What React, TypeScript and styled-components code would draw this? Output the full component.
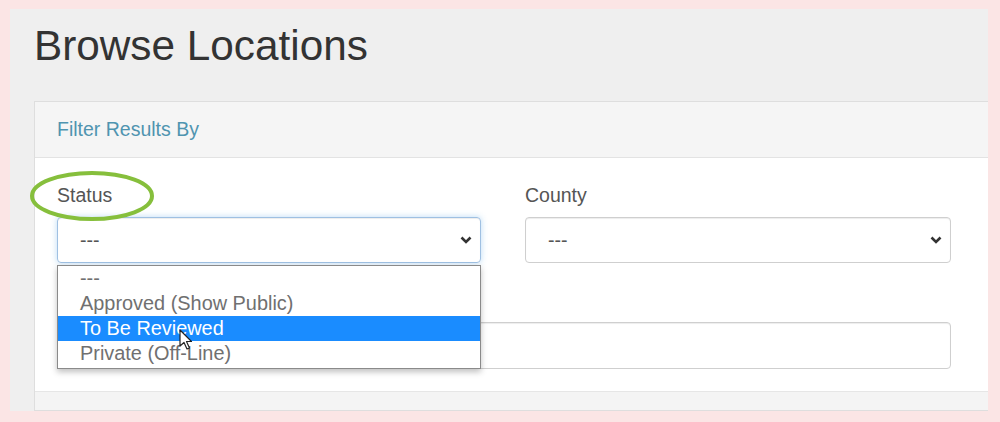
import React from "react";
import styled, { createGlobalStyle } from "styled-components";

const GlobalStyle = createGlobalStyle`
  * { box-sizing: border-box; }
  body {
    margin: 0;
    background: #fbe5e5;
    font-family: "Liberation Sans", Arial, sans-serif;
  }
`;

const Frame = styled.div`
  height: 422px;
  padding: 9px 12px 11px 10px;
`;

const Page = styled.div`
  height: 402px;
  background: #efefef;
  padding: 14px 0 0 24px;
  display: flex;
  flex-direction: column;
  overflow: hidden;
`;

const Heading = styled.h1`
  margin: 0;
  font-size: 42.3px;
  line-height: 45px;
  font-weight: 400;
  color: #333;
`;

const Panel = styled.div`
  margin-top: 33px;
  margin-right: -20px;
  flex: 1;
  display: flex;
  flex-direction: column;
  background: #fff;
  border: 1px solid #dedede;
  border-right: none;
`;

const PanelHeader = styled.div`
  height: 56px;
  display: flex;
  align-items: center;
  padding-left: 22px;
  background: #f5f5f5;
  border-bottom: 1px solid #e3e3e3;
  color: #4f94b0;
  font-size: 19.5px;
`;

const PanelBody = styled.div`
  display: grid;
  grid-template-columns: 424px 426px;
  column-gap: 44px;
  row-gap: 25px;
  padding: 25px 0 22px 22px;
`;

const PanelFooter = styled.div`
  flex: 1;
  background: #f4f4f4;
  border-top: 1px solid #e6e6e6;
`;

const FormGroup = styled.div<{ $wide?: boolean }>`
  position: relative;
  display: flex;
  flex-direction: column;
  gap: 10px;
  grid-column: ${(p) => (p.$wide ? "1 / -1" : "auto")};
  padding-top: ${(p) => (p.$wide ? "34px" : "0")};
`;

const Label = styled.label`
  font-size: 19.5px;
  line-height: 24px;
  color: #555;
`;

const SelectBox = styled.div<{ $focused?: boolean }>`
  height: 46px;
  display: flex;
  align-items: center;
  justify-content: space-between;
  padding: 0 8px 0 22px;
  border: 1px solid ${(p) => (p.$focused ? "#9fc0e2" : "#cfcfcf")};
  border-radius: 4px;
  color: #555;
  font-size: 19.5px;
  box-shadow: ${(p) =>
    p.$focused
      ? "inset 0 1px 1px rgba(0,0,0,.075), 0 0 6px rgba(102,175,233,.45)"
      : "inset 0 1px 1px rgba(0,0,0,.075)"};
`;

const TextInput = styled.div`
  height: 47px;
  border: 1px solid #cfcfcf;
  border-radius: 4px;
  box-shadow: inset 0 1px 1px rgba(0, 0, 0, 0.075);
`;

const Dropdown = styled.ul`
  position: absolute;
  top: 82px;
  left: 0;
  width: 424px;
  margin: 0;
  padding: 0 0 2px;
  list-style: none;
  background: #fff;
  border: 1px solid #8a8a8a;
  box-shadow: 0 3px 6px rgba(0, 0, 0, 0.25);
  z-index: 2;
`;

const Option = styled.li<{ $active?: boolean }>`
  height: 25px;
  line-height: 25px;
  padding-left: 22px;
  font-size: 19.9px;
  color: ${(p) => (p.$active ? "#fff" : "#707070")};
  background: ${(p) => (p.$active ? "#1a8cff" : "transparent")};
`;

const Ring = styled.svg`
  position: absolute;
  left: -30px;
  top: -15px;
  pointer-events: none;
`;

const Cursor = styled.svg`
  position: absolute;
  left: 121px;
  top: 63px;
`;

const Chevron = () => (
  <svg width="12" height="8" viewBox="0 0 12 8">
    <polyline points="1.5,1.5 6,6 10.5,1.5" fill="none" stroke="#333" strokeWidth="2.6" />
  </svg>
);

const options = ["---", "Approved (Show Public)", "To Be Reviewed", "Private (Off-Line)"];

export default function App() {
  return (
    <Frame>
      <GlobalStyle />
      <Page>
        <Heading>Browse Locations</Heading>
        <Panel>
          <PanelHeader>Filter Results By</PanelHeader>
          <PanelBody>
            <FormGroup>
              <Label>Status</Label>
              <SelectBox $focused>
                <span>---</span>
                <Chevron />
              </SelectBox>
              <Ring width="130" height="56" viewBox="0 0 130 56">
                <ellipse cx="65" cy="28" rx="60" ry="23" fill="none" stroke="#86bf3c" strokeWidth="4" />
              </Ring>
              <Dropdown>
                {options.map((o) => (
                  <Option key={o} $active={o === "To Be Reviewed"}>
                    {o}
                  </Option>
                ))}
                <Cursor width="14" height="22" viewBox="0 0 14 22">
                  <path
                    d="M1 1 L1 17 L5 13.5 L8 20 L10.5 19 L7.5 12.5 L12.5 12.5 Z"
                    fill="#fff"
                    stroke="#222"
                    strokeWidth="1.2"
                    strokeLinejoin="round"
                  />
                </Cursor>
              </Dropdown>
            </FormGroup>
            <FormGroup>
              <Label>County</Label>
              <SelectBox>
                <span>---</span>
                <Chevron />
              </SelectBox>
            </FormGroup>
            <FormGroup $wide>
              <TextInput />
            </FormGroup>
          </PanelBody>
          <PanelFooter />
        </Panel>
      </Page>
    </Frame>
  );
}
